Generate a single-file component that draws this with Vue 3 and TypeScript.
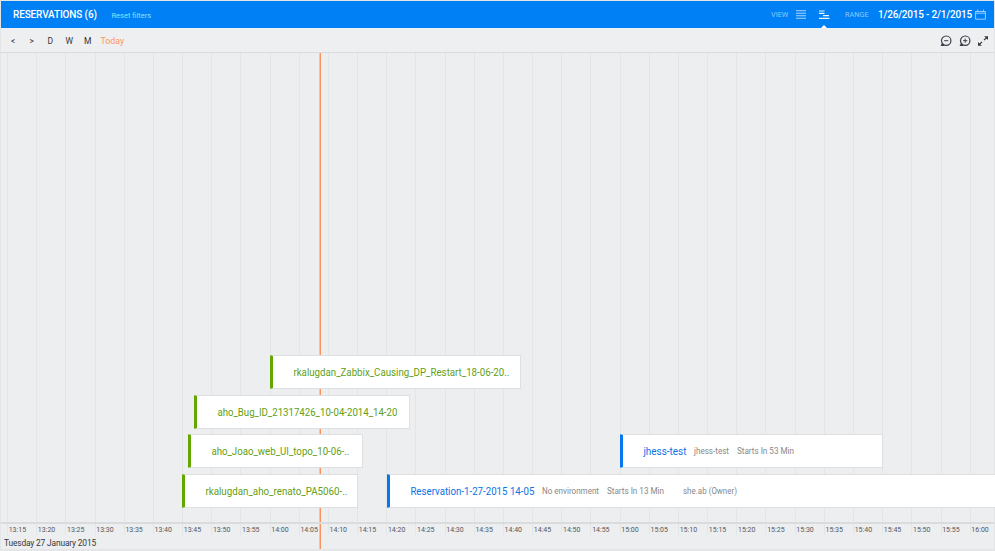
<script setup lang="ts">
interface Reservation {
  name: string
  width: number
  gap: number
  kind: 'active' | 'upcoming'
  textWidth: number
  details?: { text: string; width: number; gap: number }[]
}

const STEP = 29.18

const ticks: string[] = Array.from({ length: 34 }, (_, i) => {
  const minutes = 13 * 60 + 15 + i * 5
  return `${Math.floor(minutes / 60)}:${String(minutes % 60).padStart(2, '0')}`
})

const rows: Reservation[][] = [
  [{ name: 'rkalugdan_Zabbix_Causing_DP_Restart_18-06-20..', gap: 268, width: 251, kind: 'active', textWidth: 216 }],
  [{ name: 'aho_Bug_ID_21317426_10-04-2014_14-20', gap: 192.3, width: 216, kind: 'active', textWidth: 180 }],
  [
    { name: 'aho_Joao_web_UI_topo_10-06-..', gap: 186.3, width: 175.2, kind: 'active', textWidth: 138 },
    {
      name: 'jhess-test', gap: 256.5, width: 263, kind: 'upcoming', textWidth: 43,
      details: [
        { text: 'jhess-test', width: 35, gap: 8 },
        { text: 'Starts In 53 Min', width: 57, gap: 8 },
      ],
    },
  ],
  [
    { name: 'rkalugdan_aho_renato_PA5060-..', gap: 180.3, width: 175.7, kind: 'active', textWidth: 142 },
    {
      name: 'Reservation-1-27-2015 14-05', gap: 29, width: 611, kind: 'upcoming', textWidth: 124,
      details: [
        { text: 'No environment', width: 57, gap: 8 },
        { text: 'Starts In 13 Min', width: 57, gap: 8 },
        { text: 'she.ab (Owner)', width: 54, gap: 19 },
      ],
    },
  ],
]
</script>

<template>
  <div class="page">
    <header class="topbar">
      <h1 class="title">RESERVATIONS (6)</h1>
      <a class="reset">Reset filters</a>
      <div class="view">
        <span class="caption">VIEW</span>
        <svg width="10" height="10" viewBox="0 0 10 10"><path d="M0 .8h10M0 3.3h10M0 5.8h10M0 8.3h10" stroke="#a5d3fc" stroke-width="1.1" /></svg>
        <span class="timeline-view">
          <svg width="11" height="10" viewBox="0 0 11 10"><path d="M0 1h5.5M0 3.3h5.5M4 5.7h6M0 8.3h10.5" stroke="#e8f5ff" stroke-width="1.2" /></svg>
          <i class="pointer"></i>
        </span>
      </div>
      <div class="range">
        <span class="caption range-caption">RANGE</span>
        <span class="dates">1/26/2015 - 2/1/2015</span>
        <svg width="11" height="11" viewBox="0 0 11 11" fill="none" stroke="#a9d6fd"><path d="M.6 2.5h9.8v7.7H.6zM.6 4.2h9.8M2.6.6v2M8.4.6v2" stroke-width=".9" /></svg>
      </div>
    </header>

    <nav class="toolbar">
      <span class="prev">&lt;</span><span class="next">&gt;</span>
      <span class="day">D</span><span class="week">W</span><span class="month">M</span>
      <span class="today">Today</span>
      <div class="tools">
        <svg width="12" height="12" viewBox="0 0 12 12" fill="none" stroke="#3c3f4c"><circle cx="6.2" cy="5.7" r="4.7" stroke-width="1.2" /><path d="M4.1 5.7h4.2" /><path d="M.8 10.3H4M3 8.8L1 10.4" stroke-width="1.3" /></svg>
        <svg width="12" height="12" viewBox="0 0 12 12" fill="none" stroke="#3c3f4c"><circle cx="6.2" cy="5.7" r="4.7" stroke-width="1.2" /><path d="M4.1 5.7h4.2M6.2 3.6v4.2" /><path d="M.8 10.3H4M3 8.8L1 10.4" stroke-width="1.3" /></svg>
        <svg width="12" height="12" viewBox="0 0 12 12"><path d="M7.2 1.2H11V5zM1 7v3.8h3.8z" fill="#35383e" /><path d="M9.6 2.6L7 5.1M2.4 9.4L5 6.9" stroke="#35383e" stroke-width="1.3" /></svg>
      </div>
    </nav>

    <main class="timeline">
      <div class="ticks">
        <div v-for="tick in ticks" :key="tick" class="tick" :style="{ width: STEP + 'px' }">
          <span>{{ tick }}</span>
        </div>
      </div>
      <i class="now"></i>
      <div class="rows">
        <div v-for="(row, r) in rows" :key="r" class="row">
          <article
            v-for="item in row"
            :key="item.name"
            class="bar"
            :class="item.kind"
            :style="{ marginLeft: item.gap + 'px', width: item.width + 'px' }"
          >
            <svg class="name" :width="item.textWidth" height="16">
              <text x="0.4" y="11.5" :textLength="item.textWidth" lengthAdjust="spacingAndGlyphs">{{ item.name }}</text>
            </svg>
            <svg
              v-for="detail in item.details"
              :key="detail.text"
              class="detail"
              :width="detail.width"
              height="14"
              :style="{ marginLeft: detail.gap + 'px' }"
            >
              <text x="0" y="10" :textLength="detail.width" lengthAdjust="spacingAndGlyphs">{{ detail.text }}</text>
            </svg>
          </article>
        </div>
      </div>
      <div class="axis"></div>
      <footer class="date">Tuesday 27 January 2015</footer>
    </main>
  </div>
</template>

<style>
body {
  background: #fff;
}
</style>

<style scoped>
.page {
  width: 995px;
  height: 551px;
  box-sizing: border-box;
  padding: 1px 1px 0;
  display: flex;
  flex-direction: column;
  overflow: hidden;
  background: #e3e5e6;
  font-family: Roboto, 'Liberation Sans', sans-serif;
}

svg {
  display: block;
  flex: none;
}

.topbar {
  height: 27px;
  flex: none;
  display: flex;
  align-items: center;
  background: #0080f5;
  color: #fff;
  white-space: nowrap;
}

.title {
  margin: 1px 0 0 12px;
  width: 98.5px;
  font-size: 10px;
  font-weight: 500;
  line-height: 14px;
  letter-spacing: -0.14px;
}

.reset {
  padding-top: 1px;
  font-size: 7.5px;
  color: #8be0ff;
}

.view {
  margin-left: auto;
  display: flex;
  align-items: center;
}

.caption {
  font-size: 7.3px;
  width: 25px;
  color: #8fc9fc;
}

.timeline-view {
  position: relative;
  margin-left: 13px;
}

.pointer {
  position: absolute;
  left: 2px;
  top: 15px;
  border: 3px solid transparent;
  border-top: 0;
  border-bottom: 3px solid #fff;
}

.range {
  display: flex;
  align-items: center;
  margin: 0 8px 0 15px;
}

.range-caption {
  width: 33px;
}

.dates {
  width: 97px;
  font-size: 10px;
  font-weight: 500;
  letter-spacing: -0.2px;
}

.toolbar {
  height: 24px;
  flex: none;
  display: flex;
  align-items: center;
  background: #eeeff0;
  border-bottom: 1px solid #d8dadc;
  font-size: 8.5px;
  color: #33363b;
}

.toolbar > * {
  padding-top: 2.5px;
}

.prev {
  width: 18.5px;
  margin-left: 10px;
  font-size: 8.2px;
}

.next {
  width: 18px;
  font-size: 8.2px;
}

.day {
  width: 18px;
}

.week {
  width: 18.5px;
}

.month {
  width: 16.5px;
}

.today {
  color: #ff9368;
  font-size: 8.8px;
}

.tools {
  display: flex;
  gap: 6.5px;
  margin: 0 5px 0 auto;
}

.timeline {
  position: relative;
  height: 496px;
  flex: none;
  display: flex;
  flex-direction: column;
  background: #eceef0;
}

.ticks {
  position: absolute;
  inset: 0 0 14px;
  display: flex;
  overflow: hidden;
  padding-left: 6px;
}

.tick {
  flex: none;
  box-sizing: border-box;
  display: flex;
  align-items: flex-end;
  padding: 0 0 0.5px 0.7px;
  border-left: 1px solid #e4e5e6;
  font-size: 7px;
  line-height: 9px;
  color: #55585c;
}

.now {
  position: absolute;
  left: 318px;
  top: 0;
  bottom: 0;
  width: 1px;
  border-left: 1px solid #f6c0a5;
  background: #fb9360;
}

.rows {
  position: relative;
  flex: 1;
  padding-top: 302px;
  display: flex;
  flex-direction: column;
  gap: 5.7px;
}

.row {
  display: flex;
  height: 34px;
  padding-left: 1px;
}

.bar {
  flex: none;
  box-sizing: border-box;
  display: flex;
  align-items: center;
  padding-left: 20px;
  background: #fff;
  border: 1px solid #dddfe1;
  border-left: 3px solid #62a800;
  border-radius: 1px;
}

.upcoming {
  border-left-color: #0878ee;
}

.name {
  font-size: 10.5px;
  fill: #62a014;
  overflow: visible;
}

.upcoming .name {
  fill: #0b72e8;
}

.detail {
  font-size: 8.2px;
  fill: #85888a;
  overflow: visible;
}

.axis {
  position: absolute;
  left: 0;
  right: 0;
  top: 469px;
  height: 2px;
  background: #d9dbdd;
}

.date {
  height: 12px;
  padding-left: 3px;
  font-size: 8.4px;
  line-height: 12px;
  letter-spacing: -0.15px;
  color: #36393d;
}
</style>
